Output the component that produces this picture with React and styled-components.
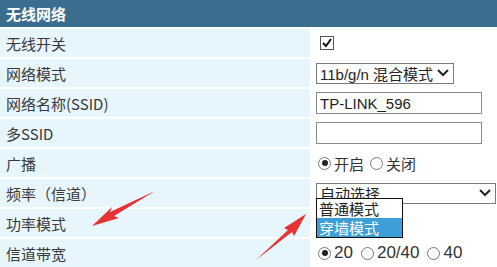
import React from "react";
import styled, { createGlobalStyle } from "styled-components";

const GlobalStyle = createGlobalStyle`
  html, body {
    margin: 0;
    padding: 0;
    background: #ffffff;
  }
  body {
    font-family: "Noto Sans CJK SC", "Noto Sans", sans-serif;
    color: #333;
  }
`;

const Page = styled.div`
  position: relative;
  width: 497px;
  height: 267px;
  overflow: hidden;
  display: grid;
  grid-template-columns: 310px 1fr;
  grid-template-rows: 27px repeat(8, 28px);
  row-gap: 2px;
  background: #ffffff;
`;

const Header = styled.div`
  grid-column: 1 / 3;
  background: #3b6d8e;
  color: #fff;
  font-weight: bold;
  font-size: 15px;
  display: flex;
  align-items: center;
  padding-left: 6px;
`;

const Label = styled.div`
  background: #e7f5fc;
  font-size: 15px;
  color: #3a3a3a;
  display: flex;
  align-items: center;
  padding-left: 6px;
`;

const Field = styled.div`
  display: flex;
  align-items: center;
  padding-left: 6px;
  position: relative;
  font-size: 15px;
  color: #222;
`;

const Check = styled.span`
  width: 12px;
  height: 12px;
  border: 1px solid #555;
  margin-left: 4px;
  display: flex;
  align-items: center;
  justify-content: center;
  background: #fff;
`;

const Select = styled.div`
  width: ${p => p.w}px;
  height: 21px;
  border: 1px solid #7a7a7a;
  box-sizing: border-box;
  display: flex;
  align-items: center;
  justify-content: space-between;
  padding: 0 3px 0 3px;
  font-size: 15px;
  font-family: "Liberation Sans", "Noto Sans CJK SC", sans-serif;
  color: #222;
  background: #fff;
  overflow: hidden;
`;

const TextInput = styled.div`
  width: 166px;
  height: 22px;
  border: 1px solid #8a8a8a;
  box-sizing: border-box;
  display: flex;
  align-items: center;
  padding-left: 3px;
  font-size: 15px;
  font-family: "Liberation Sans", sans-serif;
  color: #222;
  background: #fff;
`;

const RadioGroup = styled.div`
  display: flex;
  align-items: center;
  gap: ${p => (p.num ? "8px" : "6px")};
  margin-left: 2px;
  color: #333;
`;

const RadioItem = styled.label`
  display: flex;
  align-items: center;
  gap: 3px;
  font-family: ${p => (p.num ? '"Liberation Sans", sans-serif' : '"Noto Sans CJK SC", sans-serif')};
  font-size: ${p => (p.num ? "17px" : "15px")};
`;

const Dot = styled.span`
  width: 11px;
  height: 11px;
  border-radius: 50%;
  border: 1px solid #777;
  display: flex;
  align-items: center;
  justify-content: center;
  background: #fff;

  &::after {
    content: "";
    width: 6px;
    height: 6px;
    border-radius: 50%;
    background: ${p => (p.on ? "#222" : "transparent")};
  }
`;

const Dropdown = styled.div`
  position: absolute;
  left: 6px;
  top: 19px;
  width: 85px;
  border: 1px solid #111;
  background: #fff;
  z-index: 2;
`;

const Option = styled.div`
  height: 19px;
  line-height: 19px;
  padding-left: 2px;
  font-size: 15px;
  overflow: hidden;
  color: ${p => (p.active ? "#fff" : "#222")};
  background: ${p => (p.active ? "#3e9fd8" : "#fff")};
`;

const Arrows = styled.svg`
  position: absolute;
  left: 0;
  top: 0;
  pointer-events: none;
  z-index: 3;
`;

const Chevron = () => (
  <svg width="14" height="10" viewBox="0 0 14 10">
    <path d="M2 2 L7 7 L12 2" fill="none" stroke="#222" strokeWidth="2" />
  </svg>
);

const Radio = ({ on, num, children }) => (
  <RadioItem num={num}>
    <Dot on={on} />
    {children}
  </RadioItem>
);

export default function App() {
  return (
    <>
      <GlobalStyle />
      <Page>
        <Header>无线网络</Header>

        <Label>无线开关</Label>
        <Field>
          <Check>
            <svg width="10" height="10" viewBox="0 0 10 10">
              <path d="M1 5 L4 8 L9 1" fill="none" stroke="#111" strokeWidth="2" />
            </svg>
          </Check>
        </Field>

        <Label>网络模式</Label>
        <Field>
          <Select w={138}>
            <span>11b/g/n 混合模式</span>
            <Chevron />
          </Select>
        </Field>

        <Label>网络名称(SSID)</Label>
        <Field>
          <TextInput>TP-LINK_596</TextInput>
        </Field>

        <Label>多SSID</Label>
        <Field>
          <TextInput />
        </Field>

        <Label>广播</Label>
        <Field>
          <RadioGroup>
            <Radio on>开启</Radio>
            <Radio>关闭</Radio>
          </RadioGroup>
        </Field>

        <Label>频率（信道）</Label>
        <Field>
          <Select w={180}>
            <span>自动选择</span>
            <Chevron />
          </Select>
          <Dropdown>
            <Option>普通模式</Option>
            <Option active>穿墙模式</Option>
          </Dropdown>
        </Field>

        <Label>功率模式</Label>
        <Field />

        <Label>信道带宽</Label>
        <Field>
          <RadioGroup num>
            <Radio on num>20</Radio>
            <Radio num>20/40</Radio>
            <Radio num>40</Radio>
          </RadioGroup>
        </Field>

        <Arrows width="497" height="267" viewBox="0 0 497 267">
          <path d="M155 191 L110 212 L112 207 L92 226 L119 218 L114 216 Z" fill="#e53333" />
          <path d="M256 260 L288 230 L284 228 L306 214 L294 236 L292 232 Z" fill="#e53333" />
        </Arrows>
      </Page>
    </>
  );
}
